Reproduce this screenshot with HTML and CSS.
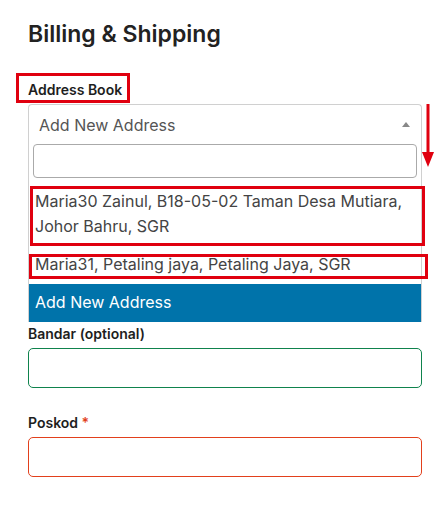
FILE: index.html
```html
<!DOCTYPE html>
<html>
<head>
<meta charset="utf-8">
<link rel="stylesheet" href="styles.css">
</head>
<body>
<div class="page">
  <h2 class="title">Billing &amp; Shipping</h2>
  <div class="field">
    <label class="label">Address Book</label>
    <div class="select">
      <div class="select-head">
        <span class="select-value">Add New Address</span>
        <span class="caret"></span>
      </div>
      <div class="search-wrap"><div class="search"></div></div>
      <ul class="options">
        <li class="option">Maria30 Zainul, B18-05-02 Taman Desa Mutiara, Johor Bahru, SGR</li>
        <li class="option">Maria31, Petaling jaya, Petaling Jaya, SGR</li>
        <li class="option active">Add New Address</li>
      </ul>
    </div>
  </div>
  <div class="field">
    <label class="label">Bandar (optional)</label>
    <div class="input valid"></div>
  </div>
  <div class="field spaced">
    <label class="label">Poskod <span class="req">*</span></label>
    <div class="input invalid"></div>
  </div>
  <div class="field spaced last">
    <label class="label">Negeri <span class="req">*</span></label>
    <div class="input"></div>
  </div>

  <div class="mark mark-label"></div>
  <div class="mark mark-opt1"></div>
  <div class="mark mark-opt2"></div>
  <svg class="arrow" width="14" height="64" viewBox="0 0 14 64">
    <rect x="5.5" y="0" width="3" height="50" fill="#e0000f"/>
    <polygon points="1,48 13,48 7,63" fill="#e0000f"/>
  </svg>
</div>
</body>
</html>
```
FILE: styles.css
```css
* { box-sizing: border-box; }
html, body { margin: 0; padding: 0; background: #fff; }
body { font-family: Inter, "Noto Sans", sans-serif; color: #1e1e1e; }
.page { position: relative; width: 444px; height: 506px; overflow: hidden; padding: 20px 22px 0 28px; }
.title { margin: 0 0 31px; font-size: 23px; line-height: 29px; font-weight: 600; color: #222; }
.field { display: flex; flex-direction: column; }
.field.spaced { margin-top: 25px; }
.field.last { margin-top: 28px; }
.label { font-size: 14px; font-weight: 600; line-height: 20px; margin-bottom: 4px; color: #1e1e1e; }
.req { color: #e2401c; }
.select { border: 1px solid #d0d0d0; border-radius: 4px 4px 0 0; border-bottom: none; margin-bottom: 2px; }
.select-head { height: 36px; display: flex; align-items: center; justify-content: space-between; padding: 3px 11px 0 10px; }
.select-value { font-size: 16px; color: #555; }
.caret { width: 0; height: 0; border-left: 4.5px solid transparent; border-right: 4.5px solid transparent; border-bottom: 5px solid #888; }
.search-wrap { padding: 3px 4px 5px; }
.search { height: 34px; border: 1px solid #aaa; border-radius: 4px; }
.options { list-style: none; margin: 0; padding: 0; }
.option { font-size: 16px; line-height: 25px; padding: 6px 6px 7px; color: #444; }
.option.active { background: #0073aa; color: #fff; }
.input { height: 40px; border: 1px solid #ccc; border-radius: 5px; }
.input.valid { border-color: #0f834d; }
.input.invalid { border-color: #e2401c; }
.mark { position: absolute; border: 3px solid #e0000f; }
.mark-label { left: 16px; top: 73px; width: 114px; height: 30px; }
.mark-opt1 { left: 30px; top: 186px; width: 395px; height: 60px; }
.mark-opt2 { left: 29px; top: 254px; width: 399px; height: 25px; }
.arrow { position: absolute; left: 421px; top: 104px; }
```
